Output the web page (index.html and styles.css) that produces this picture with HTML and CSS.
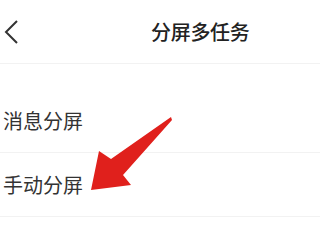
FILE: index.html
```html
<!DOCTYPE html>
<html lang="zh-CN">
<head>
    <meta charset="UTF-8">
    <meta name="viewport" content="width=device-width, initial-scale=1.0">
    <title>分屏多任务</title>
    <link rel="stylesheet" href="styles.css">
</head>
<body>
    <div class="header">
        <svg class="back" width="16" height="26" viewBox="0 0 16 26">
            <polyline points="13,2 2,13 13,24" fill="none" stroke="#333" stroke-width="2"/>
        </svg>
        <div class="title">分屏多任务</div>
    </div>
    <div class="list">
        <div class="item">消息分屏</div>
        <div class="item">手动分屏</div>
    </div>
    <svg class="arrow" width="320" height="240" viewBox="0 0 320 240">
        <polygon points="171,117 111,159 99,151 91,190 131,185 123,175 172,120" fill="#e0201c"/>
    </svg>
</body>
</html>
```

FILE: styles.css
```css
body {
    margin: 0;
    width: 320px;
    height: 240px;
    overflow: hidden;
    background-color: #fff;
    font-family: 'Noto Sans CJK SC', 'Noto Sans', sans-serif;
    position: relative;
}
.header {
    display: flex;
    align-items: center;
    height: 63px;
    border-bottom: 1px solid #f2f2f2;
}
.back {
    margin-left: 4px;
    margin-top: 1px;
}
.title {
    margin-left: 131px;
    font-size: 20px;
    font-weight: 500;
    color: #222;
    letter-spacing: -0.3px;
}
.list {
    padding-top: 25px;
}
.item {
    display: flex;
    align-items: center;
    height: 63px;
    padding-left: 3px;
    border-bottom: 1px solid #f2f2f2;
    font-size: 20px;
    color: #333;
}
.arrow {
    position: absolute;
    left: 0;
    top: 0;
}
```
